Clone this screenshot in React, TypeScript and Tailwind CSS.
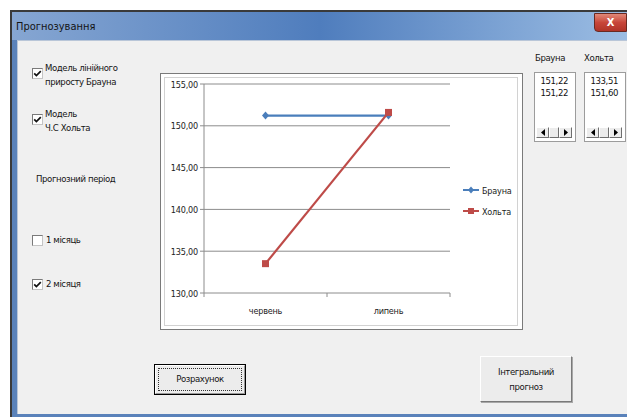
import { useState } from "react";

const uiFont = {
  fontFamily: '"Liberation Sans Narrow", "DejaVu Sans Condensed", "Liberation Sans", sans-serif',
};

const CheckBox = ({ checked }: { checked: boolean }) => (
  <span className="flex h-[11px] w-[11px] shrink-0 items-center justify-center border border-t-[#7a7a7a] border-l-[#7a7a7a] border-r-[#c4c4c4] border-b-[#c4c4c4] bg-white">
    {checked && (
      <svg width="9" height="9" viewBox="0 0 9 9">
        <path d="M1.2 4.3 L3.4 6.6 L7.8 2.1" stroke="#111" strokeWidth="1.7" fill="none" />
      </svg>
    )}
  </span>
);

const ScrollBtn = ({ dir }: { dir: "l" | "r" }) => (
  <span className="flex h-[11px] w-[13px] items-center justify-center border border-t-white border-l-white border-r-[#6f6f6f] border-b-[#6f6f6f] bg-[#ececec]">
    <svg width="4" height="7" viewBox="0 0 4 7">
      {dir === "l" ? <path d="M4 0 L0 3.5 L4 7 Z" fill="#000" /> : <path d="M0 0 L4 3.5 L0 7 Z" fill="#000" />}
    </svg>
  </span>
);

const ListBox = ({ values }: { values: string[] }) => (
  <div className="flex h-[70px] w-[42px] flex-col border border-[#9c9c9c] bg-white">
    <div className="flex flex-col items-end pr-[7px] pt-[2px] text-[9.5px] leading-[12px] tracking-[-0.4px] text-[#111]">
      {values.map((v, i) => (
        <span key={i}>{v}</span>
      ))}
    </div>
    <div className="mt-auto mb-[3px] flex px-[1px]">
      <ScrollBtn dir="l" />
      <span className="h-[11px] w-[10px] border border-t-white border-l-white border-r-[#6f6f6f] border-b-[#6f6f6f] bg-[#ececec]" />
      <ScrollBtn dir="r" />
    </div>
  </div>
);

// y scale: 155 at top grid line, 41.8px per 5 units
const yOf = (v: number) => 10 + ((155 - v) * 41.8) / 5;
const xs = [104.5, 227.5];
const brown = [151.22, 151.22];
const holt = [133.51, 151.6];

const Chart = () => (
  <div className="h-[257px] w-[363px] shrink-0 border border-[#7a7a7a] bg-white">
    <svg width="361" height="255" viewBox="0 0 361 255" style={{ fontFamily: uiFont.fontFamily, letterSpacing: "-0.2px" }}>
      <rect x="3.5" y="3.5" width="353" height="248" fill="none" stroke="#d2d2d2" />
      {[155, 150, 145, 140, 135, 130].map((v) => (
        <g key={v}>
          <line x1="39" x2="289" y1={yOf(v)} y2={yOf(v)} stroke="#8c8c8c" strokeWidth="1" />
          <text x="37" y={yOf(v) + 3.5} fontSize="9" textAnchor="end" fill="#222">
            {v},00
          </text>
        </g>
      ))}
      <line x1="43" x2="43" y1="10" y2="219" stroke="#8c8c8c" />
      {[43, 166, 289].map((x) => (
        <line key={x} x1={x} x2={x} y1="219" y2="223" stroke="#8c8c8c" />
      ))}
      <text x={xs[0]} y="240" fontSize="9" textAnchor="middle" fill="#222">
        червень
      </text>
      <text x={xs[1]} y="240" fontSize="9" textAnchor="middle" fill="#222">
        липень
      </text>

      <polyline points={xs.map((x, i) => `${x},${yOf(brown[i])}`).join(" ")} fill="none" stroke="#4a7ebb" strokeWidth="2.2" />
      {xs.map((x, i) => (
        <path key={x} d={`M${x} ${yOf(brown[i]) - 4} L${x + 3.5} ${yOf(brown[i])} L${x} ${yOf(brown[i]) + 4} L${x - 3.5} ${yOf(brown[i])} Z`} fill="#4a7ebb" />
      ))}
      <polyline points={xs.map((x, i) => `${x},${yOf(holt[i])}`).join(" ")} fill="none" stroke="#be4b48" strokeWidth="2.2" />
      {xs.map((x, i) => (
        <rect key={x} x={x - 3.5} y={yOf(holt[i]) - 3.5} width="7" height="7" fill="#be4b48" />
      ))}

      <line x1="302" x2="318" y1="116" y2="116" stroke="#4a7ebb" strokeWidth="2" />
      <path d="M310 112.5 L313 116 L310 119.5 L307 116 Z" fill="#4a7ebb" />
      <text x="321" y="119.5" fontSize="9" fill="#222">
        Брауна
      </text>
      <line x1="302" x2="318" y1="137" y2="137" stroke="#be4b48" strokeWidth="2" />
      <rect x="307" y="134" width="6" height="6" fill="#be4b48" />
      <text x="321" y="140.5" fontSize="9" fill="#222">
        Хольта
      </text>
    </svg>
  </div>
);

const App = (): JSX.Element => {
  const [brownOn, setBrownOn] = useState<boolean>(true);
  const [holtOn, setHoltOn] = useState<boolean>(true);
  const [months, setMonths] = useState<number>(2);

  return (
    <div className="h-[417px] w-[627px] overflow-hidden bg-white pl-[10px] pt-[10px]" style={uiFont}>
      <div className="flex h-[407px] flex-col border-l-2 border-t-2 border-[#3a3a3a] bg-[#5a82ba]">
        {/* title bar */}
        <div className="flex h-[28px] shrink-0 items-start justify-between bg-gradient-to-r from-[#86a6d2] via-[#4f7dbd] to-[#9cbde3]">
          <span className="pl-[4px] pt-[8px] text-[11px] leading-[13px] text-[#141414]">Прогнозування</span>
          <span className="mt-[1px] flex h-[19px] w-[33px] items-center justify-center rounded-bl-[4px] border border-[#6a2a22] bg-gradient-to-b from-[#e08878] via-[#c8463a] to-[#b03428] text-[11px] font-bold leading-none text-white">
            X
          </span>
        </div>

        {/* client area */}
        <div className="ml-[5px] flex h-[374px] flex-col border-l border-t border-[#b9c6d8] bg-[#f0f0f0] text-[9.5px] leading-[14px] tracking-[-0.4px] text-[#141414]">
          <div className="flex">
            {/* options */}
            <div className="flex w-[142px] shrink-0 flex-col pl-[14px] pt-[20px]">
              <label className="flex gap-[2px]" onClick={() => setBrownOn(!brownOn)}>
                <span className="mt-[7px]">
                  <CheckBox checked={brownOn} />
                </span>
                <span>
                  Модель лінійного
                  <br />
                  приросту Брауна
                </span>
              </label>
              <label className="mt-[18px] flex gap-[2px]" onClick={() => setHoltOn(!holtOn)}>
                <span className="mt-[7px]">
                  <CheckBox checked={holtOn} />
                </span>
                <span>
                  Модель
                  <br />
                  Ч.С Хольта
                </span>
              </label>
              <span className="mt-[37px] pl-[4px]">Прогнозний період</span>
              <label className="mt-[47px] flex items-center gap-[3px]" onClick={() => setMonths(1)}>
                <CheckBox checked={months === 1} />
                <span>1 місяць</span>
              </label>
              <label className="mt-[30px] flex items-center gap-[3px]" onClick={() => setMonths(2)}>
                <CheckBox checked={months === 2} />
                <span>2 місяця</span>
              </label>
            </div>

            <div className="pt-[32px]">
              <Chart />
            </div>

            {/* forecast values */}
            <div className="ml-[11px] flex gap-[8px] pt-[10px]">
              <div className="flex flex-col gap-[7px]">
                <span className="pl-[1px]">Брауна</span>
                <ListBox values={["151,22", "151,22"]} />
              </div>
              <div className="flex flex-col gap-[7px]">
                <span>Хольта</span>
                <ListBox values={["133,51", "151,60"]} />
              </div>
            </div>
          </div>

          {/* actions */}
          <div className="mt-[26px] flex h-[46px] items-center pl-[136px]">
            <button className="h-[31px] w-[92px] border border-black bg-[#ececec] p-0">
              <span className="flex h-full w-full border border-t-white border-l-white border-r-[#9a9a9a] border-b-[#9a9a9a] p-[2px]">
                <span className="flex h-full w-full items-center justify-center border border-dotted border-[#333]">
                  Розрахунок
                </span>
              </span>
            </button>
            <button className="ml-[234px] flex h-[46px] w-[92px] items-center justify-center border border-t-white border-l-white border-r-[#7a7a7a] border-b-[#7a7a7a] bg-[#ececec] leading-[15px] shadow-[1px_1px_0_#a8a8a8]">
              Інтегральний
              <br />
              прогноз
            </button>
          </div>
        </div>
      </div>
    </div>
  );
};

export default App;
